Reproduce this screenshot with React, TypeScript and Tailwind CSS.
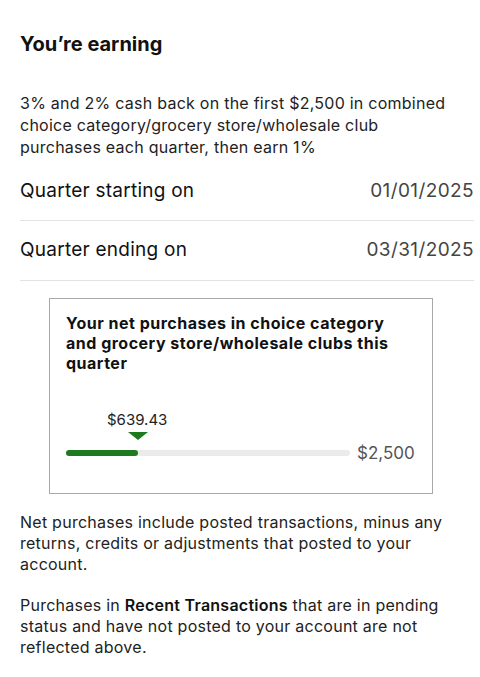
export default function App() {
  return (
    <div className="w-[480px] min-h-[677px] bg-white text-black pl-5 pr-5 pt-[32px] pb-6" style={{ fontFamily: "Inter, 'Noto Sans', sans-serif" }}>
      <h1 className="text-[20px] font-bold leading-[24px] tracking-[0px] text-[#111]">You’re earning</h1>
      <p className="mt-[36px] text-[16px] leading-[22px] tracking-[0.25px] text-[#222]">
        3% and 2% cash back on the first $2,500 in combined choice category/grocery store/wholesale club purchases each quarter, then earn 1%
      </p>
      <div className="mt-[5px] -mr-[14px]">
        <div className="flex justify-between items-center h-[58px] border-b border-[#e3e3e3] text-[19px] tracking-[0.25px]">
          <span className="text-[#111]">Quarter starting on</span>
          <span className="text-[#444] tracking-[0.4px]">01/01/2025</span>
        </div>
        <div className="flex justify-between items-center h-[60px] border-b border-[#e3e3e3] text-[19px] tracking-[0.25px]">
          <span className="text-[#111]">Quarter ending on</span>
          <span className="text-[#444] tracking-[0.4px]">03/31/2025</span>
        </div>
      </div>
      <div className="mt-[17px] ml-[29px] w-[384px] border border-[#a8a8a8] pl-[16px] pr-[14px] pt-[14px] pb-[30px]">
        <p className="w-[335px] text-[16px] font-bold leading-[20px] tracking-[0.5px] text-[#111]">
          Your net purchases in choice category and grocery store/wholesale clubs this quarter
        </p>
        <div className="mt-[38px]">
          <div className="ml-[41px] text-[15px] leading-[18px] text-[#222]">$639.43</div>
          <div className="ml-[62px] mt-[3px] w-0 h-0 border-l-[10px] border-r-[10px] border-t-[8px] border-l-transparent border-r-transparent border-t-[#1c7a1c]"></div>
          <div className="flex items-center gap-[7px] mt-[3px]">
            <div className="relative h-[6px] w-[284px] rounded-full bg-[#ebebeb]">
              <div className="absolute left-0 top-0 h-[6px] w-[72px] rounded-full bg-[#1f7a1f]"></div>
            </div>
            <span className="text-[17px] leading-[20px] text-[#555]">$2,500</span>
          </div>
        </div>
      </div>
      <p className="mt-[18px] text-[16px] leading-[21px] tracking-[0.25px] text-[#222]">
        Net purchases include posted transactions, minus any returns, credits or adjustments that posted to your account.
      </p>
      <p className="mt-[20px] text-[16px] leading-[21px] tracking-[0.25px] text-[#222]">
        Purchases in <span className="font-semibold text-[#111]">Recent Transactions</span> that are in pending status and have not posted to your account are not reflected above.
      </p>
    </div>
  );
}
